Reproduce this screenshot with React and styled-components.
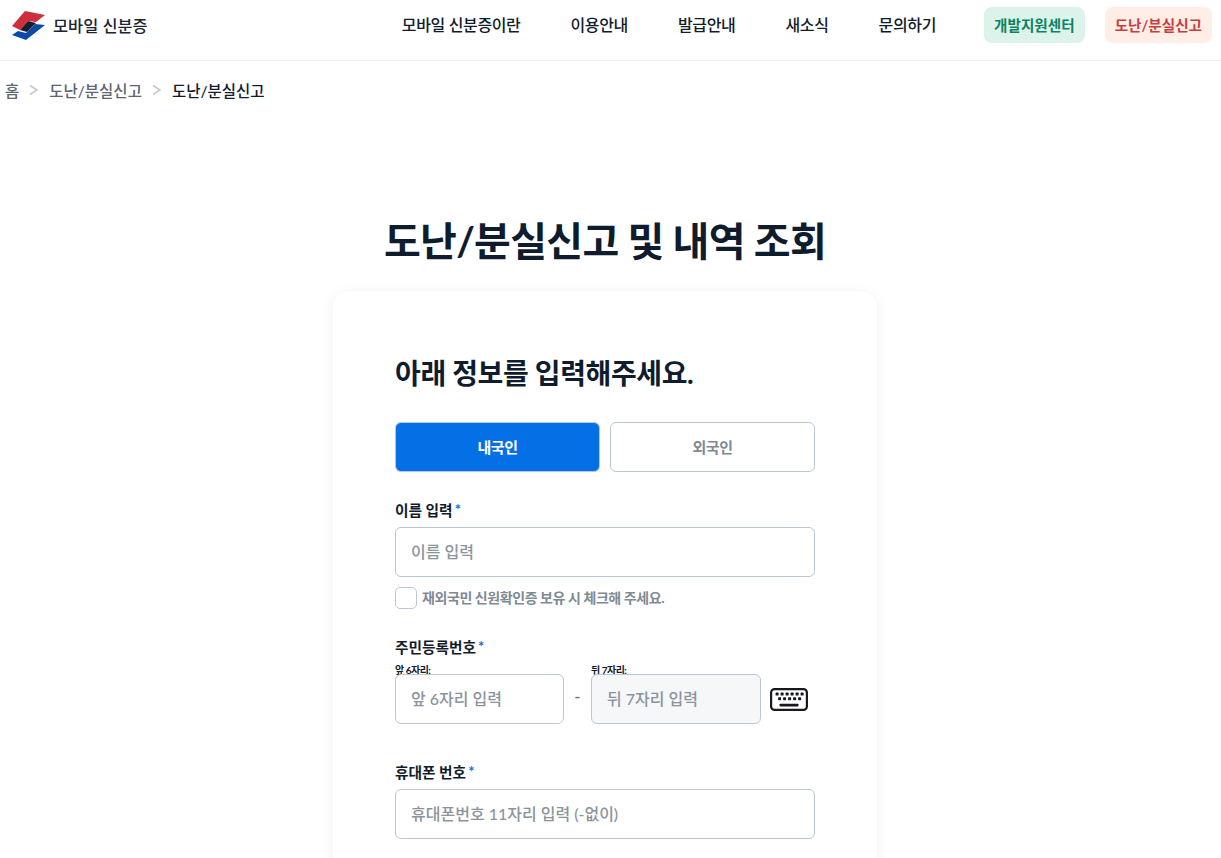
import React from 'react';
import styled, { createGlobalStyle } from 'styled-components';

const GlobalStyle = createGlobalStyle`
  html, body {
    margin: 0;
    height: 858px;
    overflow: hidden;
    background: #fff;
  }
  * {
    box-sizing: border-box;
  }
  body {
    font-family: 'Lato', 'Noto Sans CJK KR', sans-serif;
    color: #0f1c2e;
  }
`;

const Header = styled.header`
  display: flex;
  align-items: flex-start;
  justify-content: space-between;
  height: 61px;
  padding: 7px 9px 0 12px;
  border-bottom: 1px solid #ececec;
`;

const Brand = styled.div`
  display: flex;
  align-items: center;
  gap: 8px;
  height: 36px;
  font-size: 16.4px;
  font-weight: 500;
  color: #1a2433;
`;

const Nav = styled.nav`
  display: flex;
  align-items: center;
  height: 36px;
`;

const NavLink = styled.a`
  padding-bottom: 2px;
  font-size: 16px;
  font-weight: 500;
  letter-spacing: -0.35px;
  color: #111b2b;
  margin-right: 50px;
  &:nth-child(5) {
    margin-right: 48px;
  }
`;

const NavBadge = styled.a`
  display: flex;
  align-items: center;
  height: 36px;
  padding: 0 10px 2px;
  border-radius: 8px;
  font-size: 14.6px;
  font-weight: 700;
  color: ${p => p.$color};
  background: ${p => p.$bg};
  margin-left: ${p => p.$gap || 0}px;
`;

const Crumbs = styled.div`
  display: flex;
  align-items: center;
  height: 60px;
  padding: 0 0 2px 5px;
  font-size: 15.5px;
  font-weight: 500;
  color: #5c6570;
`;

const CrumbSep = styled.span`
  display: flex;
  margin: 0 11px 0 10px;
`;

const CrumbCurrent = styled.span`
  color: #111b2b;
`;

const Title = styled.h1`
  margin: 90px 0 0;
  height: 60px;
  padding-right: 11px;
  line-height: 60px;
  text-align: center;
  font-size: 40px;
  font-weight: 700;
  letter-spacing: -0.7px;
  color: #0f1c2e;
`;

const Card = styled.section`
  width: 544px;
  margin: 20px 0 0 333px;
  padding: 56px 62px 60px;
  border-radius: 16px;
  background: #fff;
  box-shadow: 0 2px 14px rgba(0, 0, 0, 0.06);
`;

const CardHeading = styled.h2`
  margin: 0;
  height: 50px;
  padding-top: 2px;
  line-height: 48px;
  font-size: 28px;
  font-weight: 700;
  letter-spacing: -0.38px;
  color: #0f1c2e;
`;

const Tabs = styled.div`
  display: grid;
  grid-template-columns: 1fr 1fr;
  gap: 10px;
  margin-top: 25px;
`;

const Tab = styled.button`
  height: 50px;
  padding: 0 0 2px;
  border-radius: 6px;
  border: 1px solid #b8c8d6;
  font-family: inherit;
  font-size: 15px;
  font-weight: 700;
  letter-spacing: -0.5px;
  background: ${p => (p.$active ? '#0570e6' : '#fff')};
  color: ${p => (p.$active ? '#fff' : '#808a94')};
`;

const Field = styled.div`
  margin-top: ${p => p.$top}px;
`;

const Label = styled.div`
  display: flex;
  align-items: center;
  height: 20px;
  padding-bottom: 2px;
  font-size: 14.7px;
  font-weight: 700;
  letter-spacing: 0;
  color: #111b2b;
`;

const Star = styled.span`
  color: #0570e6;
  margin-left: 2px;
`;

const Input = styled.input`
  display: block;
  width: 100%;
  height: 50px;
  padding: 0 15px 2px;
  border: 1px solid #b8c8d6;
  border-radius: 6px;
  outline: none;
  font-family: inherit;
  font-size: 16px;
  font-weight: 500;
  color: #111b2b;
  background: ${p => (p.$muted ? '#f5f7f9' : '#fff')};
  &::placeholder {
    color: #8b949c;
    opacity: 1;
  }
`;

const NameInput = styled(Input)`
  margin-top: 7px;
`;

const CheckRow = styled.label`
  display: flex;
  align-items: center;
  gap: 5px;
  margin-top: 10px;
  height: 22px;
  font-size: 14px;
  font-weight: 700;
  letter-spacing: -0.42px;
  color: #808a94;
`;

const CheckBox = styled.span`
  width: 22px;
  height: 22px;
  border: 1px solid #b8c8d6;
  border-radius: 5px;
  background: #fff;
`;

const CheckText = styled.span`
  padding-bottom: 2px;
`;

const SplitRow = styled.div`
  display: grid;
  grid-template-columns: 169px 27px 170px 47px;
  align-items: end;
  margin-top: 10px;
`;

const SplitCol = styled.div`
  display: flex;
  flex-direction: column;
`;

const TinyLabel = styled.span`
  height: 7px;
  line-height: 6px;
  font-size: 10px;
  font-weight: 700;
  letter-spacing: -0.5px;
  white-space: nowrap;
  color: #111b2b;
`;

const Dash = styled.span`
  height: 50px;
  line-height: 46px;
  text-align: center;
  font-size: 17px;
  font-weight: 500;
  color: #6b7580;
`;

const KeyButton = styled.span`
  display: flex;
  align-items: center;
  justify-content: flex-end;
  height: 50px;
`;

const Logo = () => (
  <svg width="33" height="29" viewBox="0 0 33 29">
    <path d="M13 0 L33 4 L24 11 L16 10 L8 19 L0 15 Z" fill="#cf2e3c" />
    <path d="M16 10 L24 12 L15 21 L8 19 Z" fill="#16202c" />
    <path d="M23 13 L33 14 L14 29 L0 24 L6 20 L14 22 Z" fill="#0b4aa8" />
  </svg>
);

const Chevron = () => (
  <svg width="9" height="12" viewBox="0 0 9 12" fill="none">
    <path d="M1 1.5 L8 6 L1 10.5" stroke="#c4c8cc" strokeWidth="1.5" />
  </svg>
);

const KEY_ROWS = [
  [6, 11, 16, 21, 26, 31],
  [8.5, 13.5, 18.5, 23.5, 28.5],
];

const KeyboardIcon = () => (
  <svg width="38" height="23" viewBox="0 0 38 23" fill="none">
    <rect x="1.1" y="1.1" width="35.8" height="20.8" rx="3.5" stroke="#16191d" strokeWidth="2.2" />
    {KEY_ROWS.map((row, i) =>
      row.map(x => <rect key={`${i}-${x}`} x={x - 0.4} y={4.6 + i * 4.6} width="3" height="3" rx="0.6" fill="#16191d" />)
    )}
    <rect x="9.5" y="15.8" width="19" height="2.6" rx="0.8" fill="#16191d" />
  </svg>
);

const App = () => (
  <>
    <GlobalStyle />
    <Header>
      <Brand>
        <Logo />
        모바일 신분증
      </Brand>
      <Nav>
        <NavLink>모바일 신분증이란</NavLink>
        <NavLink>이용안내</NavLink>
        <NavLink>발급안내</NavLink>
        <NavLink>새소식</NavLink>
        <NavLink>문의하기</NavLink>
        <NavBadge $color="#0a8264" $bg="#dcf3ea">개발지원센터</NavBadge>
        <NavBadge $color="#c93d42" $bg="#ffeee6" $gap={20}>도난/분실신고</NavBadge>
      </Nav>
    </Header>
    <Crumbs>
      <span>홈</span>
      <CrumbSep><Chevron /></CrumbSep>
      <span>도난/분실신고</span>
      <CrumbSep><Chevron /></CrumbSep>
      <CrumbCurrent>도난/분실신고</CrumbCurrent>
    </Crumbs>
    <Title>도난/분실신고 및 내역 조회</Title>
    <Card>
      <CardHeading>아래 정보를 입력해주세요.</CardHeading>
      <Tabs>
        <Tab $active>내국인</Tab>
        <Tab>외국인</Tab>
      </Tabs>
      <Field $top={28}>
        <Label>이름 입력<Star>*</Star></Label>
        <NameInput placeholder="이름 입력" />
        <CheckRow>
          <CheckBox />
          <CheckText>재외국민 신원확인증 보유 시 체크해 주세요.</CheckText>
        </CheckRow>
      </Field>
      <Field $top={28}>
        <Label>주민등록번호<Star>*</Star></Label>
        <SplitRow>
          <SplitCol>
            <TinyLabel>앞 6자리:</TinyLabel>
            <Input placeholder="앞 6자리 입력" />
          </SplitCol>
          <Dash>-</Dash>
          <SplitCol>
            <TinyLabel>뒤 7자리:</TinyLabel>
            <Input $muted placeholder="뒤 7자리 입력" />
          </SplitCol>
          <KeyButton><KeyboardIcon /></KeyButton>
        </SplitRow>
      </Field>
      <Field $top={38}>
        <Label>휴대폰 번호<Star>*</Star></Label>
        <NameInput placeholder="휴대폰번호 11자리 입력 (-없이)" />
      </Field>
    </Card>
  </>
);

export default App;
